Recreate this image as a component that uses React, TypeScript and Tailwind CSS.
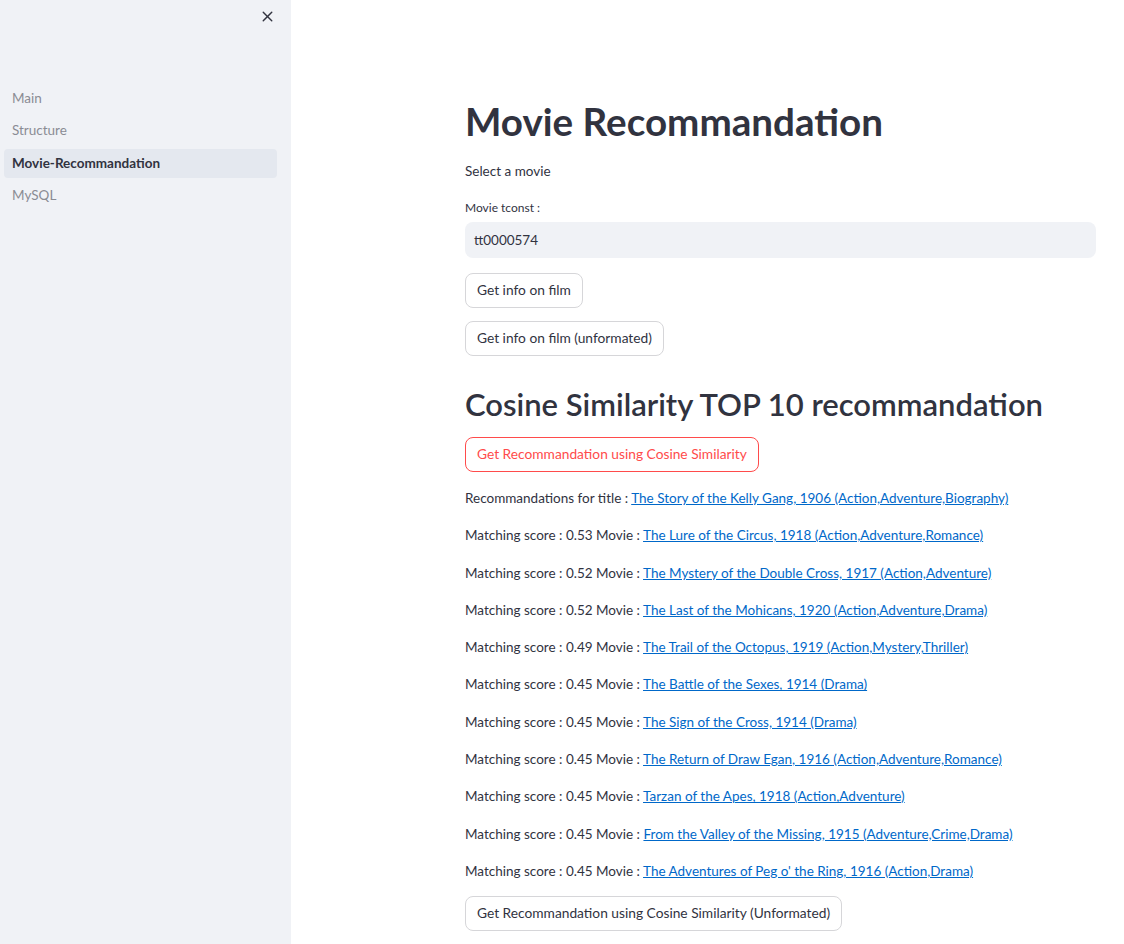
import { X } from "lucide-react";

const recs = [
  ["0.53", "The Lure of the Circus, 1918 (Action,Adventure,Romance)"],
  ["0.52", "The Mystery of the Double Cross, 1917 (Action,Adventure)"],
  ["0.52", "The Last of the Mohicans, 1920 (Action,Adventure,Drama)"],
  ["0.49", "The Trail of the Octopus, 1919 (Action,Mystery,Thriller)"],
  ["0.45", "The Battle of the Sexes, 1914 (Drama)"],
  ["0.45", "The Sign of the Cross, 1914 (Drama)"],
  ["0.45", "The Return of Draw Egan, 1916 (Action,Adventure,Romance)"],
  ["0.45", "Tarzan of the Apes, 1918 (Action,Adventure)"],
  ["0.45", "From the Valley of the Missing, 1915 (Adventure,Crime,Drama)"],
  ["0.45", "The Adventures of Peg o' the Ring, 1916 (Action,Drama)"],
];

const pages = ["Main", "Structure", "Movie-Recommandation", "MySQL"];

function Btn({ children, red }: { children: React.ReactNode; red?: boolean }) {
  return (
    <button
      className={
        red
          ? "h-[35px] px-[11px] rounded-lg border border-[#ff4b4b] bg-white text-[#ff4b4b] text-[13.75px]"
          : "h-[35px] px-[11px] rounded-lg border border-[#d6d6d9] bg-white text-[#31333f] text-[13.75px]"
      }
    >
      {children}
    </button>
  );
}

export default function App() {
  return (
    <div
      className="flex min-h-screen bg-white text-[#31333f]"
      style={{ fontFamily: '"Source Sans Pro", Lato, "Noto Sans", sans-serif' }}
    >
      <aside className="w-[291px] shrink-0 bg-[#f0f2f6] min-h-[944px]">
        <div className="flex justify-end pr-[15px] pt-[8px]">
          <X size={17} strokeWidth={2} className="text-[#31333f]" />
        </div>
        <nav className="mt-[58.5px] px-[4px] w-[281px] flex flex-col gap-[3.5px]">
          {pages.map((p) => (
            <div
              key={p}
              className={
                p === "Movie-Recommandation"
                  ? "h-[29px] flex items-center px-[8px] rounded bg-[#e4e8ef] font-bold text-[13.5px] text-[#31333f]"
                  : "h-[29px] flex items-center px-[8px] rounded text-[13.5px] text-[#8a8c94]"
              }
            >
              {p}
            </div>
          ))}
        </nav>
      </aside>

      <main className="flex-1">
        <div className="ml-[174px] w-[631px] pt-[98px] pb-[13px]">
          <h1 className="text-[38.6px] leading-[46px] font-bold">Movie Recommandation</h1>
          <p className="mt-[16px] text-[13.5px] leading-[22px]">Select a movie</p>
          <label className="block mt-[18px] text-[12px] leading-[16px]">Movie tconst :</label>
          <div className="mt-[6px] h-[36px] rounded-lg bg-[#f0f2f6] flex items-center px-[9px] text-[13.5px]">
            tt0000574
          </div>
          <div className="mt-[15px]">
            <Btn>Get info on film</Btn>
          </div>
          <div className="mt-[13px]">
            <Btn>Get info on film (unformated)</Btn>
          </div>
          <h2 className="mt-[29px] text-[31px] leading-[38px] font-semibold">
            Cosine Similarity TOP 10 recommandation
          </h2>
          <div className="mt-[14px]">
            <Btn red>Get Recommandation using Cosine Similarity</Btn>
          </div>
          <div className="mt-[15px] flex flex-col gap-[15.3px] text-[13.5px] leading-[22px]">
            <p>
              Recommandations for title :{" "}
              <a className="text-[#0068c9] underline">The Story of the Kelly Gang, 1906 (Action,Adventure,Biography)</a>
            </p>
            {recs.map(([s, t], i) => (
              <p key={i}>
                Matching score : {s} Movie : <a className="text-[#0068c9] underline">{t}</a>
              </p>
            ))}
          </div>
          <div className="mt-[14px]">
            <Btn>Get Recommandation using Cosine Similarity (Unformated)</Btn>
          </div>
        </div>
      </main>
    </div>
  );
}
